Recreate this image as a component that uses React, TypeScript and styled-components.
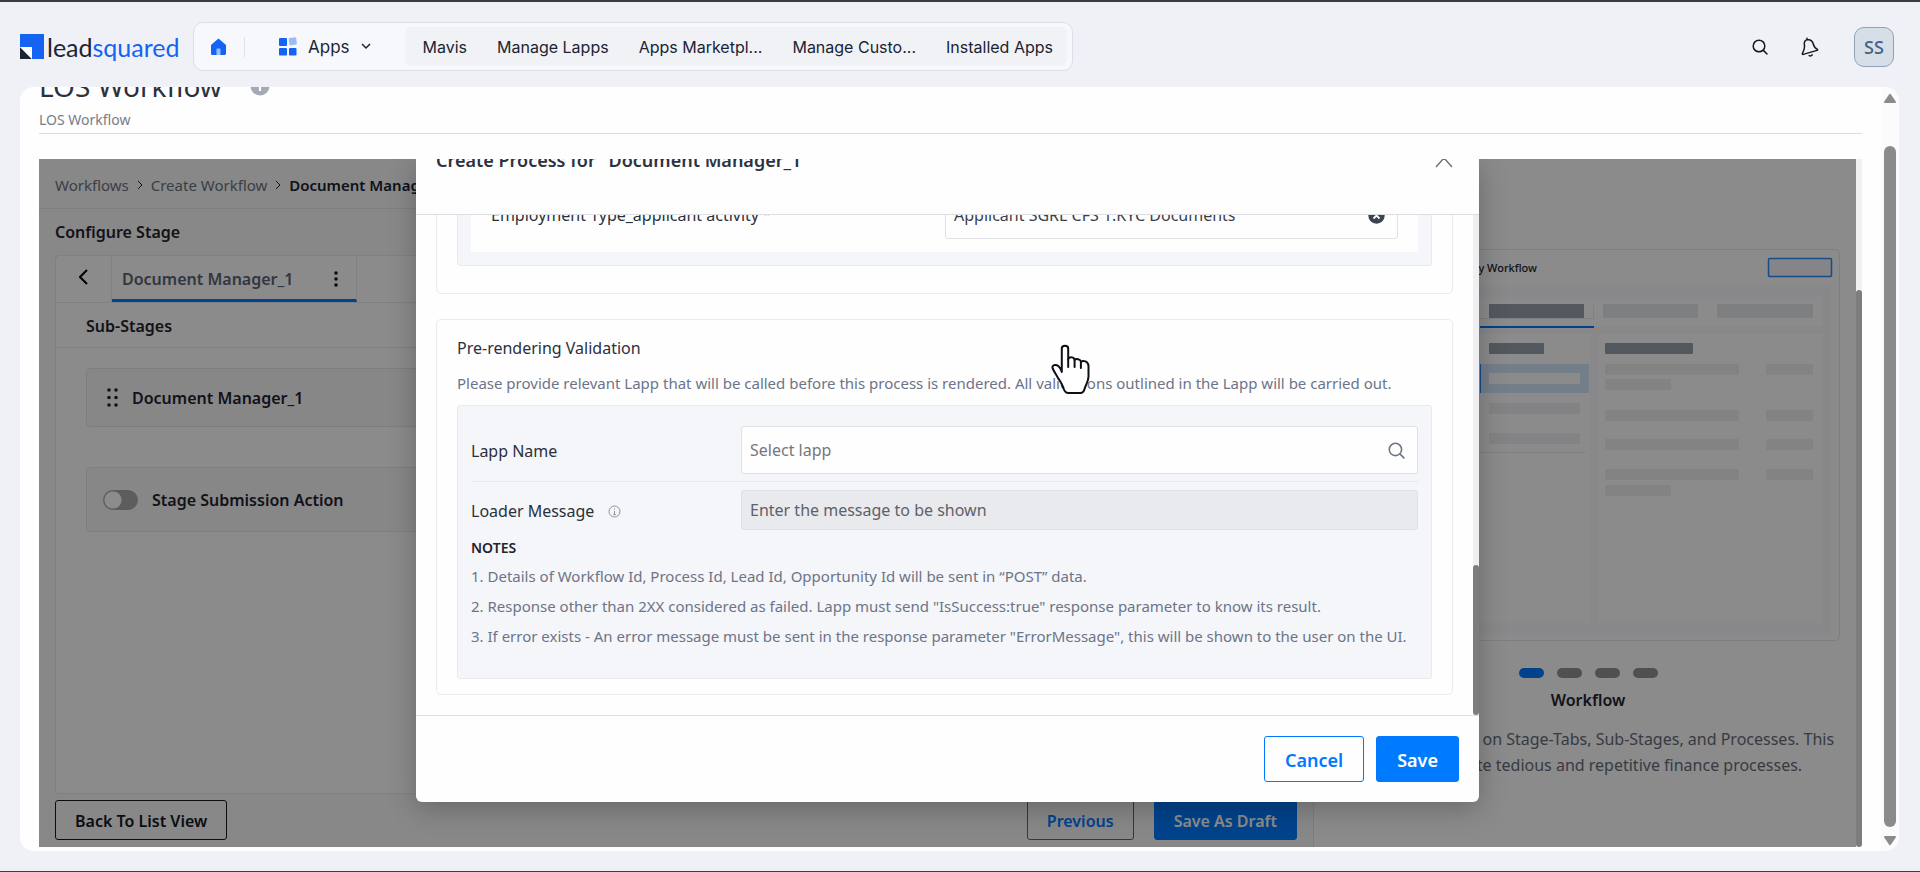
import React from "react";
import styled, { createGlobalStyle, css } from "styled-components";

const GlobalStyle = createGlobalStyle`
  *, *::before, *::after { box-sizing: border-box; }
  body { margin: 0; background: #eff1f6; }
  body, button, input { font-family: "Noto Sans", "Open Sans", sans-serif; }
  h1, h2, h3, h4, p, ol, ul { margin: 0; padding: 0; font-weight: 400; }
  ol, ul { list-style: none; }
  button { cursor: pointer; }
`;

/* ---------- Page shell ---------- */

const Page = styled.div`
  display: flex;
  flex-direction: column;
  height: 100vh;
  min-height: 640px;
  padding-bottom: 20px;
  border-top: 2px solid #3d3c41;
  border-bottom: 1px solid #3d3c41;
  background: #eff1f6;
  color: #1f2430;
`;

const TopBar = styled.header`
  display: flex;
  align-items: center;
  padding: 20px 26px 16px 20px;
`;

const Logo = styled.a`
  display: flex;
  align-items: center;
  gap: 3px;
  width: 173px;
  flex: none;
  color: #1b2433;
  font: 400 25px/32px Lato, "Open Sans", sans-serif;
  text-decoration: none;

  em {
    color: #1463f3;
    font-style: normal;
  }
`;

const NavBox = styled.nav`
  display: flex;
  align-items: center;
  height: 49px;
  padding: 5px;
  border: 1px solid #dadfe6;
  border-radius: 10px;
  background: #f7f8fc;
`;

const IconButton = styled.button<{ $size: number }>`
  display: flex;
  align-items: center;
  justify-content: center;
  width: ${(p) => p.$size}px;
  height: ${(p) => p.$size}px;
  padding: 0;
  border: 0;
  background: none;
  color: inherit;
`;

const NavDivider = styled.span`
  width: 1px;
  height: 20px;
  margin: 0 34px 0 7px;
  background: #dde1e8;
`;

const AppsButton = styled.button`
  display: flex;
  align-items: center;
  gap: 11px;
  margin-right: 34px;
  padding: 0;
  border: 0;
  background: none;
  color: #1b2433;
  font: 400 17px/24px Inter, "Open Sans", sans-serif;
`;

const NavLinks = styled.ul`
  display: flex;
  align-items: center;
  gap: 30px;
  height: 39px;
  padding: 0 14px 0 18px;
  border-radius: 6px;
  background: #f0f2f6;
`;

const NavLink = styled.a`
  color: #1b2433;
  font: 400 16px/24px Inter, "Open Sans", sans-serif;
  text-decoration: none;
  white-space: nowrap;
`;

const TopActions = styled.div`
  display: flex;
  align-items: center;
  gap: 2px;
  margin-left: auto;
  color: #16181d;
`;

const Avatar = styled.button`
  width: 40px;
  height: 40px;
  margin-left: 18px;
  padding: 0;
  border: 1px solid #8ea3b9;
  border-radius: 10px;
  background: #d6dee8;
  color: #48617f;
  font-size: 18px;
  font-weight: 500;
`;

const Card = styled.main`
  display: flex;
  flex: 1;
  min-height: 0;
  margin: 0 21px 0 20px;
  border-radius: 14px;
  background: #fefefe;
  overflow: hidden;
`;

const CardContent = styled.div`
  display: flex;
  flex: 1;
  flex-direction: column;
  min-width: 0;
  margin-top: -19px;
  padding: 0 19px 4px 19px;
`;

const PageHead = styled.div`
  padding-bottom: 3px;
  border-bottom: 1px solid #dcdee2;
`;

const PageTitle = styled.h1`
  display: flex;
  align-items: center;
  gap: 28px;
  color: #2c323d;
  font-size: 28px;
  line-height: 36px;
`;

const PageSubtitle = styled.p`
  margin-top: 6px;
  color: #777d89;
  font-size: 14px;
  line-height: 20px;
`;

/* ---------- Scroll bars ---------- */

const OuterScroll = styled.div`
  display: flex;
  flex-direction: column;
  align-items: center;
  width: 18px;
  padding: 6px 0 5px;
  background: #fbfbfc;
`;

const OuterTrack = styled.div`
  flex: 1;
  width: 12px;
  margin: 4px 0 8px;
  padding-top: 38px;
`;

const Thumb = styled.div`
  height: 100%;
  border-radius: 6px;
  background: #8b8b8b;
`;

const ScrollColumn = styled.div<{ $track: string }>`
  display: flex;
  flex: none;
  flex-direction: column;
  width: 6px;
  background: ${(p) => p.$track};
`;

const ScrollPart = styled.div<{ $grow: number; $thumb?: boolean }>`
  flex: ${(p) => p.$grow} 0 0;
  border-radius: 3px;
  background: ${(p) => (p.$thumb ? "#7d7d7d" : "none")};
`;

/* ---------- Workflow stage behind the dialog ---------- */

const Frame = styled.section`
  display: flex;
  flex: 1;
  min-height: 0;
  margin-top: 25px;
`;

const Stage = styled.div`
  position: relative;
  display: flex;
  flex: 1;
  min-width: 0;
  overflow: hidden;
`;

const Builder = styled.div`
  display: flex;
  flex: 1;
  flex-direction: column;
  min-width: 0;
  background: #f8f8f8;
`;

const Breadcrumb = styled.nav`
  display: flex;
  align-items: center;
  gap: 8px;
  height: 50px;
  padding: 2px 16px 0;
  border-bottom: 1px solid #e6e8ec;
  font-size: 15px;
  line-height: 24px;

  a {
    color: #6b7280;
    text-decoration: none;
  }
  a[aria-current] {
    color: #1b2230;
    font-weight: 600;
  }
`;

const BuilderTitle = styled.h2`
  padding: 11px 16px;
  font-size: 16px;
  font-weight: 600;
  line-height: 24px;
`;

const Panel = styled.div`
  flex: 1;
  min-height: 0;
  margin: 0 16px;
  border: 1px solid #e8e9ee;
  border-radius: 4px;
  background: #fdfdfd;
  overflow: hidden;
`;

const TabRow = styled.div`
  display: flex;
  height: 47px;
  border-bottom: 1px solid #e8e9ee;
`;

const TabBack = styled.button`
  width: 56px;
  padding: 0;
  border: 0;
  border-right: 1px solid #e8e9ee;
  background: none;
`;

const Tab = styled.div`
  display: flex;
  align-items: center;
  justify-content: space-between;
  width: 245px;
  padding: 2px 10px 0;
  border-right: 1px solid #e8e9ee;
  border-bottom: 3px solid #0078ff;
  color: #5b6473;
  font-size: 16px;
  font-weight: 600;
`;

const SubTitle = styled.h3`
  padding: 11px 30px 9px;
  border-bottom: 1px solid #e8e9ee;
  font-size: 16px;
  font-weight: 600;
  line-height: 24px;
`;

const StageList = styled.div`
  display: flex;
  flex-direction: column;
  gap: 40px;
  padding: 20px 30px;
`;

const StageRow = styled.div<{ $tall?: boolean }>`
  display: flex;
  align-items: center;
  gap: 14px;
  height: ${(p) => (p.$tall ? 65 : 59)}px;
  padding: 0 ${(p) => (p.$tall ? 16 : 20)}px;
  border: 1px solid #e5e6eb;
  border-radius: 4px;
  background: #f6f6f8;
  font-size: 16px;
  font-weight: 600;
`;

const Switch = styled.input`
  appearance: none;
  width: 35px;
  height: 20px;
  margin: 0;
  border-radius: 10px;
  background: radial-gradient(circle at 10px 10px, #fff 0 8px, #a9a9ab 9px);
`;

const Actions = styled.div`
  display: flex;
  gap: 20px;
  padding: 6px 16px 7px;
`;

type Tone = "dark" | "line" | "solid";

const Button = styled.button<{ $tone: Tone; $large?: boolean }>`
  height: 40px;
  padding: 2px 19px 0;
  border: 1px solid #0078ff;
  border-radius: 3px;
  background: none;
  color: #0078ff;
  font-size: 16px;
  font-weight: 600;
  white-space: nowrap;

  ${(p) => p.$tone === "dark" && css`
    margin-right: auto;
    border-color: #15181e;
    color: #15181e;
  `}
  ${(p) => p.$tone === "solid" && css`
    background: #007bff;
    color: #fff;
  `}
  ${(p) => p.$large && css`
    height: 46px;
    padding: 1px 20px 0;
    font-size: 18px;
  `}
`;

const Preview = styled.aside`
  display: flex;
  flex: 0 0 542px;
  flex-direction: column;
  align-items: center;
  padding: 90px 16px 0 22px;
  border-left: 1px solid #e4e5ea;
  background: #fdfdfd;
  text-align: center;
`;

const Dots = styled.div`
  display: flex;
  gap: 13px;
  margin: 27px 0 10px;
`;

const Dot = styled.button<{ $active?: boolean }>`
  width: 25px;
  height: 10px;
  padding: 0;
  border: 0;
  border-radius: 5px;
  background: ${(p) => (p.$active ? "#0078ff" : "#939393")};
`;

const PreviewTitle = styled.h3`
  margin-bottom: 14px;
  font-size: 16px;
  font-weight: 600;
  line-height: 24px;
`;

const PreviewText = styled.p`
  color: #666c78;
  font-size: 16px;
  line-height: 26px;
`;

/* ---------- Dialog ---------- */

const Overlay = styled.div`
  position: absolute;
  inset: 0;
  display: flex;
  align-items: flex-start;
  justify-content: center;
  background: rgba(0, 0, 0, 0.45);
`;

const Dialog = styled.div`
  display: flex;
  flex-direction: column;
  width: 1063px;
  max-width: 90%;
  height: calc(100% - 45px);
  border-radius: 0 0 6px 6px;
  background: #fefefe;
  box-shadow: 0 6px 28px rgba(0, 0, 0, 0.25);
  overflow: hidden;
`;

const DialogHead = styled.div`
  height: 56px;
  padding: 0 24px 0 20px;
  border-bottom: 1px solid #dcdee2;
`;

const DialogHeadRow = styled.div`
  display: flex;
  align-items: center;
  justify-content: space-between;
  margin-top: -13px;
  color: #6f757f;
`;

const DialogTitle = styled.h2`
  color: #2b3342;
  font-size: 18px;
  font-weight: 600;
  line-height: 28px;
`;

const DialogMain = styled.div`
  display: flex;
  flex: 1;
  min-height: 0;
`;

const DialogBody = styled.div`
  display: flex;
  flex: 1;
  flex-direction: column;
  justify-content: flex-end;
  gap: 25px;
  min-width: 0;
  padding: 0 20px 20px;
  overflow: hidden;
`;

const Group = styled.section<{ $roomy?: boolean }>`
  flex: none;
  padding: 16px 20px ${(p) => (p.$roomy ? 27 : 15)}px;
  border: 1px solid #ebecf1;
  border-radius: 5px;
`;

const SoftBox = styled.div<{ $nested?: boolean }>`
  padding: ${(p) => (p.$nested ? "13px" : "20px 13px 27px")};
  border: 1px solid #e8eaef;
  border-radius: 3px;
  background: #f5f6f9;
`;

const MappingRow = styled.div`
  display: flex;
  align-items: center;
  justify-content: space-between;
  padding: 13px 20px;
  background: #fefefe;
`;

const GroupTitle = styled.h3`
  color: #2b303b;
  font-size: 16px;
  line-height: 24px;
`;

const GroupText = styled.p`
  margin: 12px 0 11px;
  color: #6c7488;
  font-size: 15px;
  line-height: 22px;
`;

const FieldRow = styled.div<{ $ruled?: boolean }>`
  display: flex;
  align-items: center;
  padding: ${(p) => (p.$ruled ? "0 0 7px" : "8px 0 0")};
  border-bottom: ${(p) => (p.$ruled ? "1px solid #e6e8ed" : "0")};
`;

const Label = styled.label`
  display: flex;
  align-items: center;
  gap: 14px;
  flex: 0 0 270px;
  padding-top: 2px;
  color: #2b303b;
  font-size: 16px;
`;

const MappingLabel = styled(Label)`
  flex: 0 1 auto;
  gap: 4px;
  padding-top: 0;

  sup {
    color: #e5484d;
    font-size: 14px;
    line-height: 20px;
  }
`;

const Field = styled.div<{ $height: number; $disabled?: boolean }>`
  display: flex;
  align-items: center;
  flex: 1;
  height: ${(p) => p.$height}px;
  padding: 0 12px 0 8px;
  border: 1px solid #dfe1e6;
  border-radius: 3px;
  background: ${(p) => (p.$disabled ? "#e8eaee" : "#fefefe")};
  color: #6c7488;
`;

const MappingField = styled(Field)`
  flex: 0 0 453px;
`;

const TextInput = styled.input`
  flex: 1;
  min-width: 0;
  padding: 0;
  border: 0;
  background: none;
  color: #3a3f4a;
  font-size: 16px;

  &::placeholder {
    color: #75777c;
    opacity: 1;
  }
  &:disabled::placeholder {
    color: #5f6167;
  }
`;

const NotesTitle = styled.h4`
  margin: 7px 0 2px;
  color: #1f242e;
  font-size: 14px;
  font-weight: 600;
  line-height: 22px;
`;

const Note = styled.li`
  color: #6c7488;
  font-size: 15px;
  line-height: 30px;
`;

const DialogFoot = styled.div`
  display: flex;
  justify-content: flex-end;
  gap: 12px;
  padding: 20px;
  border-top: 1px solid #dcdee2;
`;

const Cursor = styled.svg`
  position: absolute;
  left: 1051px;
  top: 344px;
  pointer-events: none;
`;

/* ---------- Drawings ---------- */

const LogoMark = () => (
  <svg width="24" height="25" viewBox="0 0 24 25" aria-hidden="true">
    <path d="M0 0h24v25H12V13H0z" fill="#1463f3" />
    <path d="M0 13l12 12H0z" fill="#1b2433" />
    <path d="M0 13h12v12z" fill="#fff" />
  </svg>
);

const HomeIcon = () => (
  <svg width="17" height="18" viewBox="0 0 17 18" aria-hidden="true">
    <path d="M8.500 0.500 16 7v8.500a1.500 1.500 0 0 1-1.500 1.500h-12A1.500 1.500 0 0 1 1 15.500V7z" fill="#1463f3" />
    <path d="M6.500 17v-5.500a1 1 0 0 1 1-1h2a1 1 0 0 1 1 1V17z" fill="#9cbcf5" />
  </svg>
);

const AppsIcon = () => (
  <svg width="18" height="19" viewBox="0 0 18 19" aria-hidden="true">
    <rect x="0" y="1" width="8" height="8" rx="1" fill="#1463f3" />
    <rect x="10" y="0.500" width="7.500" height="7.500" rx="1" fill="#9cbcf5" transform="rotate(-8 14 4)" />
    <rect x="0" y="11" width="8" height="7.500" rx="1" fill="#1463f3" />
    <rect x="10" y="11" width="7.500" height="7.500" rx="1" fill="#1463f3" />
  </svg>
);

const Chevron = ({ w, h, d, width = 2 }: { w: number; h: number; d: string; width?: number }) => (
  <svg width={w} height={h} viewBox={`0 0 ${w} ${h}`} fill="none" stroke="currentColor" strokeWidth={width} aria-hidden="true">
    <path d={d} />
  </svg>
);

const SearchIcon = ({ size }: { size: number }) => (
  <svg width={size} height={size} viewBox="0 0 16 16" fill="none" stroke="currentColor" strokeWidth="1.500" strokeLinecap="round" aria-hidden="true">
    <circle cx="7" cy="7" r="5.800" />
    <path d="M11.400 11.400 15 15" />
  </svg>
);

const BellIcon = () => (
  <svg width="18" height="20" viewBox="0 0 18 20" fill="none" stroke="currentColor" strokeWidth="1.500" strokeLinejoin="round" strokeLinecap="round" aria-hidden="true">
    <path d="M6 1.200v1.600M3.400 8c-.6-3 .6-5 3.200-5.200 3-.4 4.800 1.200 5.600 4 .7 2.800 1.600 4.400 4 5.400.6.300.6 1-.1 1.200L2.200 17.400c-.8.200-1.100-.400-.8-1.100C2.800 13.600 4 11 3.400 8z" />
    <path d="M8.200 18.600c1 .6 2.400.2 3-.8" />
  </svg>
);

const InfoBadge = () => (
  <svg width="20" height="20" viewBox="0 0 20 20" aria-hidden="true">
    <circle cx="10" cy="10" r="9.500" fill="#a3aab5" />
    <path d="M10 5v1.500M10 9v6" stroke="#fff" strokeWidth="2.200" />
  </svg>
);

const InfoOutline = () => (
  <svg width="13" height="13" viewBox="0 0 13 13" fill="none" stroke="#8b919d" aria-hidden="true">
    <circle cx="6.500" cy="6.500" r="5.500" />
    <path d="M6.500 3.500v1.200M6.500 6v4M5.200 9.600h2.600" />
  </svg>
);

const ClearIcon = () => (
  <svg width="17" height="17" viewBox="0 0 17 17" aria-hidden="true">
    <circle cx="8.500" cy="8.500" r="8.200" fill="#3d4450" />
    <path d="M5.500 5.500l6 6M11.500 5.500l-6 6" stroke="#fff" strokeWidth="1.800" />
  </svg>
);

const DragDots = () => (
  <svg width="11" height="19" viewBox="0 0 11 19" fill="#20242c" aria-hidden="true">
    {[2, 9].map((x) => [2, 9.5, 17].map((y) => <circle key={`${x}-${y}`} cx={x} cy={y} r="1.800" />))}
  </svg>
);

const MoreDots = () => (
  <svg width="4" height="16" viewBox="0 0 4 16" fill="#15181e" aria-hidden="true">
    {[2, 8, 14].map((y) => <circle key={y} cx="2" cy={y} r="1.800" />)}
  </svg>
);

const Triangle = ({ down }: { down?: boolean }) => (
  <svg width="14" height="11" viewBox="0 0 14 11" fill="#8b8b8b" aria-hidden="true">
    <path d={down ? "M2 1h10q1.500 0 .8 1.500L8 9.600q-1 1.200-2 0L1.200 2.500Q.5 1 2 1z" : "M2 10h10q1.500 0 .8-1.500L8 1.400q-1-1.200-2 0L1.200 8.500Q.5 10 2 10z"} />
  </svg>
);

const bars: Array<[number, number, number, number, string]> = [
  [153, 55, 95, 14, "#98a1ae"],
  [153, 94, 55, 11, "#98a1ae"],
  [269, 94, 88, 11, "#98a1ae"],
  [267, 55, 95, 14, "#e6e7ea"],
  [381, 55, 96, 14, "#e6e7ea"],
  [153, 154, 91, 11, "#eeeef2"],
  [153, 184, 91, 11, "#eeeef2"],
  [269, 115, 134, 11, "#eeeef1"],
  [430, 115, 47, 11, "#eeeef1"],
  [269, 130, 66, 11, "#eeeef1"],
  [269, 161, 134, 11, "#eeeef1"],
  [430, 161, 47, 11, "#eeeef1"],
  [269, 190, 134, 11, "#eeeef1"],
  [430, 190, 47, 11, "#eeeef1"],
  [269, 220, 134, 11, "#eeeef1"],
  [430, 220, 47, 11, "#eeeef1"],
  [269, 236, 66, 11, "#eeeef1"],
];

const Illustration = () => (
  <svg width="504" height="392" viewBox="0 0 504 392" role="img" aria-label="Workflow preview">
    <rect x="0.500" y="0.500" width="503" height="391" rx="4" fill="#fdfdfd" stroke="#e4e5ea" />
    <text x="201" y="23" textAnchor="end" fontFamily="Noto Sans, sans-serif" fontSize="11" fontWeight="500" fill="#1b2230">My Workflow</text>
    <rect x="432.500" y="9.500" width="63" height="18" rx="1" fill="#f1f1f9" stroke="#2f8af5" strokeWidth="1.500" />
    <rect x="8" y="38" width="487" height="346" fill="#f8f8fb" />
    <rect x="16" y="48" width="470" height="29" fill="#fdfdfd" />
    <rect x="16" y="85" width="238" height="289" fill="#fdfdfd" />
    <rect x="262" y="85" width="224" height="289" fill="#fdfdfd" />
    <rect x="144" y="77" width="114" height="2" fill="#0078ff" />
    <path d="M144 69.500H257.500V56M144 203.500H250" fill="none" stroke="#e6e7ec" />
    <rect x="144" y="115" width="109" height="29" fill="#d3e5fa" />
    <rect x="144" y="115" width="1" height="29" fill="#2f8af5" />
    <rect x="153" y="124" width="91" height="11" fill="#fdfdfd" />
    {bars.map(([x, y, w, h, fill]) => (
      <rect key={`${x}-${y}`} x={x} y={y} width={w} height={h} rx="1" fill={fill} />
    ))}
  </svg>
);

const HandCursor = () => (
  <Cursor width="39" height="51" viewBox="0 0 39 51" aria-hidden="true">
    <path
      d="M10.800 4.500c0-3.600 6.400-3.600 6.400 0v10.500c1.600-2.600 6-2 6.400.8 1.600-1.400 5.800-.8 6.300 1.800 2.200-1.500 7.600-.4 7.600 4.400v10.500c0 5-2.800 8-4 12.500-.6 2.700-1.800 4-4.300 4H17.600c-2.600 0-4-1.400-4.800-4-1.200-4.500-3.800-8-6-11.500C5.400 31 3 27.500 1.700 24.500c-1.200-3.200 2.800-4.800 5.600-2.400 1.700 1.400 2.700 3.200 3.500 6z"
      fill="#fff"
      stroke="#0d0f14"
      strokeWidth="2"
      strokeLinejoin="round"
    />
    <path d="M17.200 15v8M23.600 16v7M29.900 18v6" stroke="#0d0f14" strokeWidth="2" strokeLinecap="round" />
  </Cursor>
);

/* ---------- Sections ---------- */

const navItems = ["Mavis", "Manage Lapps", "Apps Marketpl...", "Manage Custo...", "Installed Apps"];

const notes = [
  "1. Details of Workflow Id, Process Id, Lead Id, Opportunity Id will be sent in “POST” data.",
  '2. Response other than 2XX considered as failed. Lapp must send "IsSuccess:true" response parameter to know its result.',
  '3. If error exists - An error message must be sent in the response parameter "ErrorMessage", this will be shown to the user on the UI.',
];

const Header = () => (
  <TopBar>
    <Logo href="#">
      <LogoMark />
      <span>lead<em>squared</em></span>
    </Logo>
    <NavBox aria-label="Main">
      <IconButton $size={38} aria-label="Home"><HomeIcon /></IconButton>
      <NavDivider />
      <AppsButton>
        <AppsIcon />
        Apps
        <Chevron w={10} h={7} d="M1 1l4 4 4-4" width={1.5} />
      </AppsButton>
      <NavLinks>
        {navItems.map((item) => (
          <li key={item}><NavLink href="#">{item}</NavLink></li>
        ))}
      </NavLinks>
    </NavBox>
    <TopActions>
      <IconButton $size={48} aria-label="Search"><SearchIcon size={16} /></IconButton>
      <IconButton $size={48} aria-label="Notifications"><BellIcon /></IconButton>
      <Avatar>SS</Avatar>
    </TopActions>
  </TopBar>
);

const BuilderPane = () => (
  <Builder>
    <Breadcrumb aria-label="Breadcrumb">
      <a href="#">Workflows</a>
      <Chevron w={6} h={10} d="M1 1l4 4-4 4" width={1} />
      <a href="#">Create Workflow</a>
      <Chevron w={6} h={10} d="M1 1l4 4-4 4" width={1} />
      <a href="#" aria-current="page">Document Manager_1</a>
    </Breadcrumb>
    <BuilderTitle>Configure Stage</BuilderTitle>
    <Panel>
      <TabRow>
        <TabBack aria-label="Back"><Chevron w={9} h={16} d="M8 1L1 8l7 7" /></TabBack>
        <Tab>
          Document Manager_1
          <IconButton $size={20} aria-label="More"><MoreDots /></IconButton>
        </Tab>
      </TabRow>
      <SubTitle>Sub-Stages</SubTitle>
      <StageList>
        <StageRow>
          <DragDots />
          Document Manager_1
        </StageRow>
        <StageRow $tall>
          <Switch type="checkbox" role="switch" id="submission" />
          <label htmlFor="submission">Stage Submission Action</label>
        </StageRow>
      </StageList>
    </Panel>
    <Actions>
      <Button $tone="dark">Back To List View</Button>
      <Button $tone="line">Previous</Button>
      <Button $tone="solid">Save As Draft</Button>
    </Actions>
  </Builder>
);

const PreviewPane = () => (
  <Preview>
    <Illustration />
    <Dots>
      <Dot $active aria-label="Slide 1" />
      <Dot aria-label="Slide 2" />
      <Dot aria-label="Slide 3" />
      <Dot aria-label="Slide 4" />
    </Dots>
    <PreviewTitle>Workflow</PreviewTitle>
    <PreviewText>
      Workflow is based on Stage-Tabs, Sub-Stages, and Processes. This<br />
      helps automate tedious and repetitive finance processes.
    </PreviewText>
  </Preview>
);

const ProcessDialog = () => (
  <Dialog role="dialog" aria-labelledby="dialog-title">
    <DialogHead>
      <DialogHeadRow>
        <DialogTitle id="dialog-title">Create Process for "Document Manager_1"</DialogTitle>
        <IconButton $size={22} aria-label="Collapse"><Chevron w={18} h={16} d="M1 15l8-9 8 9" width={1.5} /></IconButton>
      </DialogHeadRow>
    </DialogHead>
    <DialogMain>
      <DialogBody>
        <Group $roomy>
          <SoftBox $nested>
            <MappingRow>
              <MappingLabel htmlFor="employment">
                Employment Type_applicant activity <sup>*</sup>
              </MappingLabel>
              <MappingField $height={48}>
                <TextInput id="employment" defaultValue="Applicant SGRL CFS 1.KYC Documents" />
                <IconButton $size={17} aria-label="Clear"><ClearIcon /></IconButton>
              </MappingField>
            </MappingRow>
          </SoftBox>
        </Group>
        <Group>
          <GroupTitle>Pre-rendering Validation</GroupTitle>
          <GroupText>
            Please provide relevant Lapp that will be called before this process is rendered. All validations outlined in the Lapp will be carried out.
          </GroupText>
          <SoftBox>
            <FieldRow $ruled>
              <Label htmlFor="lapp">Lapp Name</Label>
              <Field $height={48}>
                <TextInput id="lapp" placeholder="Select lapp" />
                <SearchIcon size={17} />
              </Field>
            </FieldRow>
            <FieldRow>
              <Label htmlFor="loader">Loader Message <InfoOutline /></Label>
              <Field $height={40} $disabled>
                <TextInput id="loader" placeholder="Enter the message to be shown" disabled />
              </Field>
            </FieldRow>
            <NotesTitle>NOTES</NotesTitle>
            <ol>
              {notes.map((note) => <Note key={note}>{note}</Note>)}
            </ol>
          </SoftBox>
        </Group>
      </DialogBody>
      <ScrollColumn $track="#efeff2">
        <ScrollPart $grow={70} />
        <ScrollPart $grow={30} $thumb />
      </ScrollColumn>
    </DialogMain>
    <DialogFoot>
      <Button $tone="line" $large>Cancel</Button>
      <Button $tone="solid" $large>Save</Button>
    </DialogFoot>
  </Dialog>
);

export default function App() {
  return (
    <Page>
      <GlobalStyle />
      <Header />
      <Card>
        <CardContent>
          <PageHead>
            <PageTitle>LOS Workflow <InfoBadge /></PageTitle>
            <PageSubtitle>LOS Workflow</PageSubtitle>
          </PageHead>
          <Frame>
            <Stage>
              <BuilderPane />
              <PreviewPane />
              <Overlay><ProcessDialog /></Overlay>
            </Stage>
            <ScrollColumn $track="#f1f1f1">
              <ScrollPart $grow={19} />
              <ScrollPart $grow={81} $thumb />
            </ScrollColumn>
          </Frame>
        </CardContent>
        <OuterScroll>
          <Triangle />
          <OuterTrack><Thumb /></OuterTrack>
          <Triangle down />
        </OuterScroll>
      </Card>
      <HandCursor />
    </Page>
  );
}
